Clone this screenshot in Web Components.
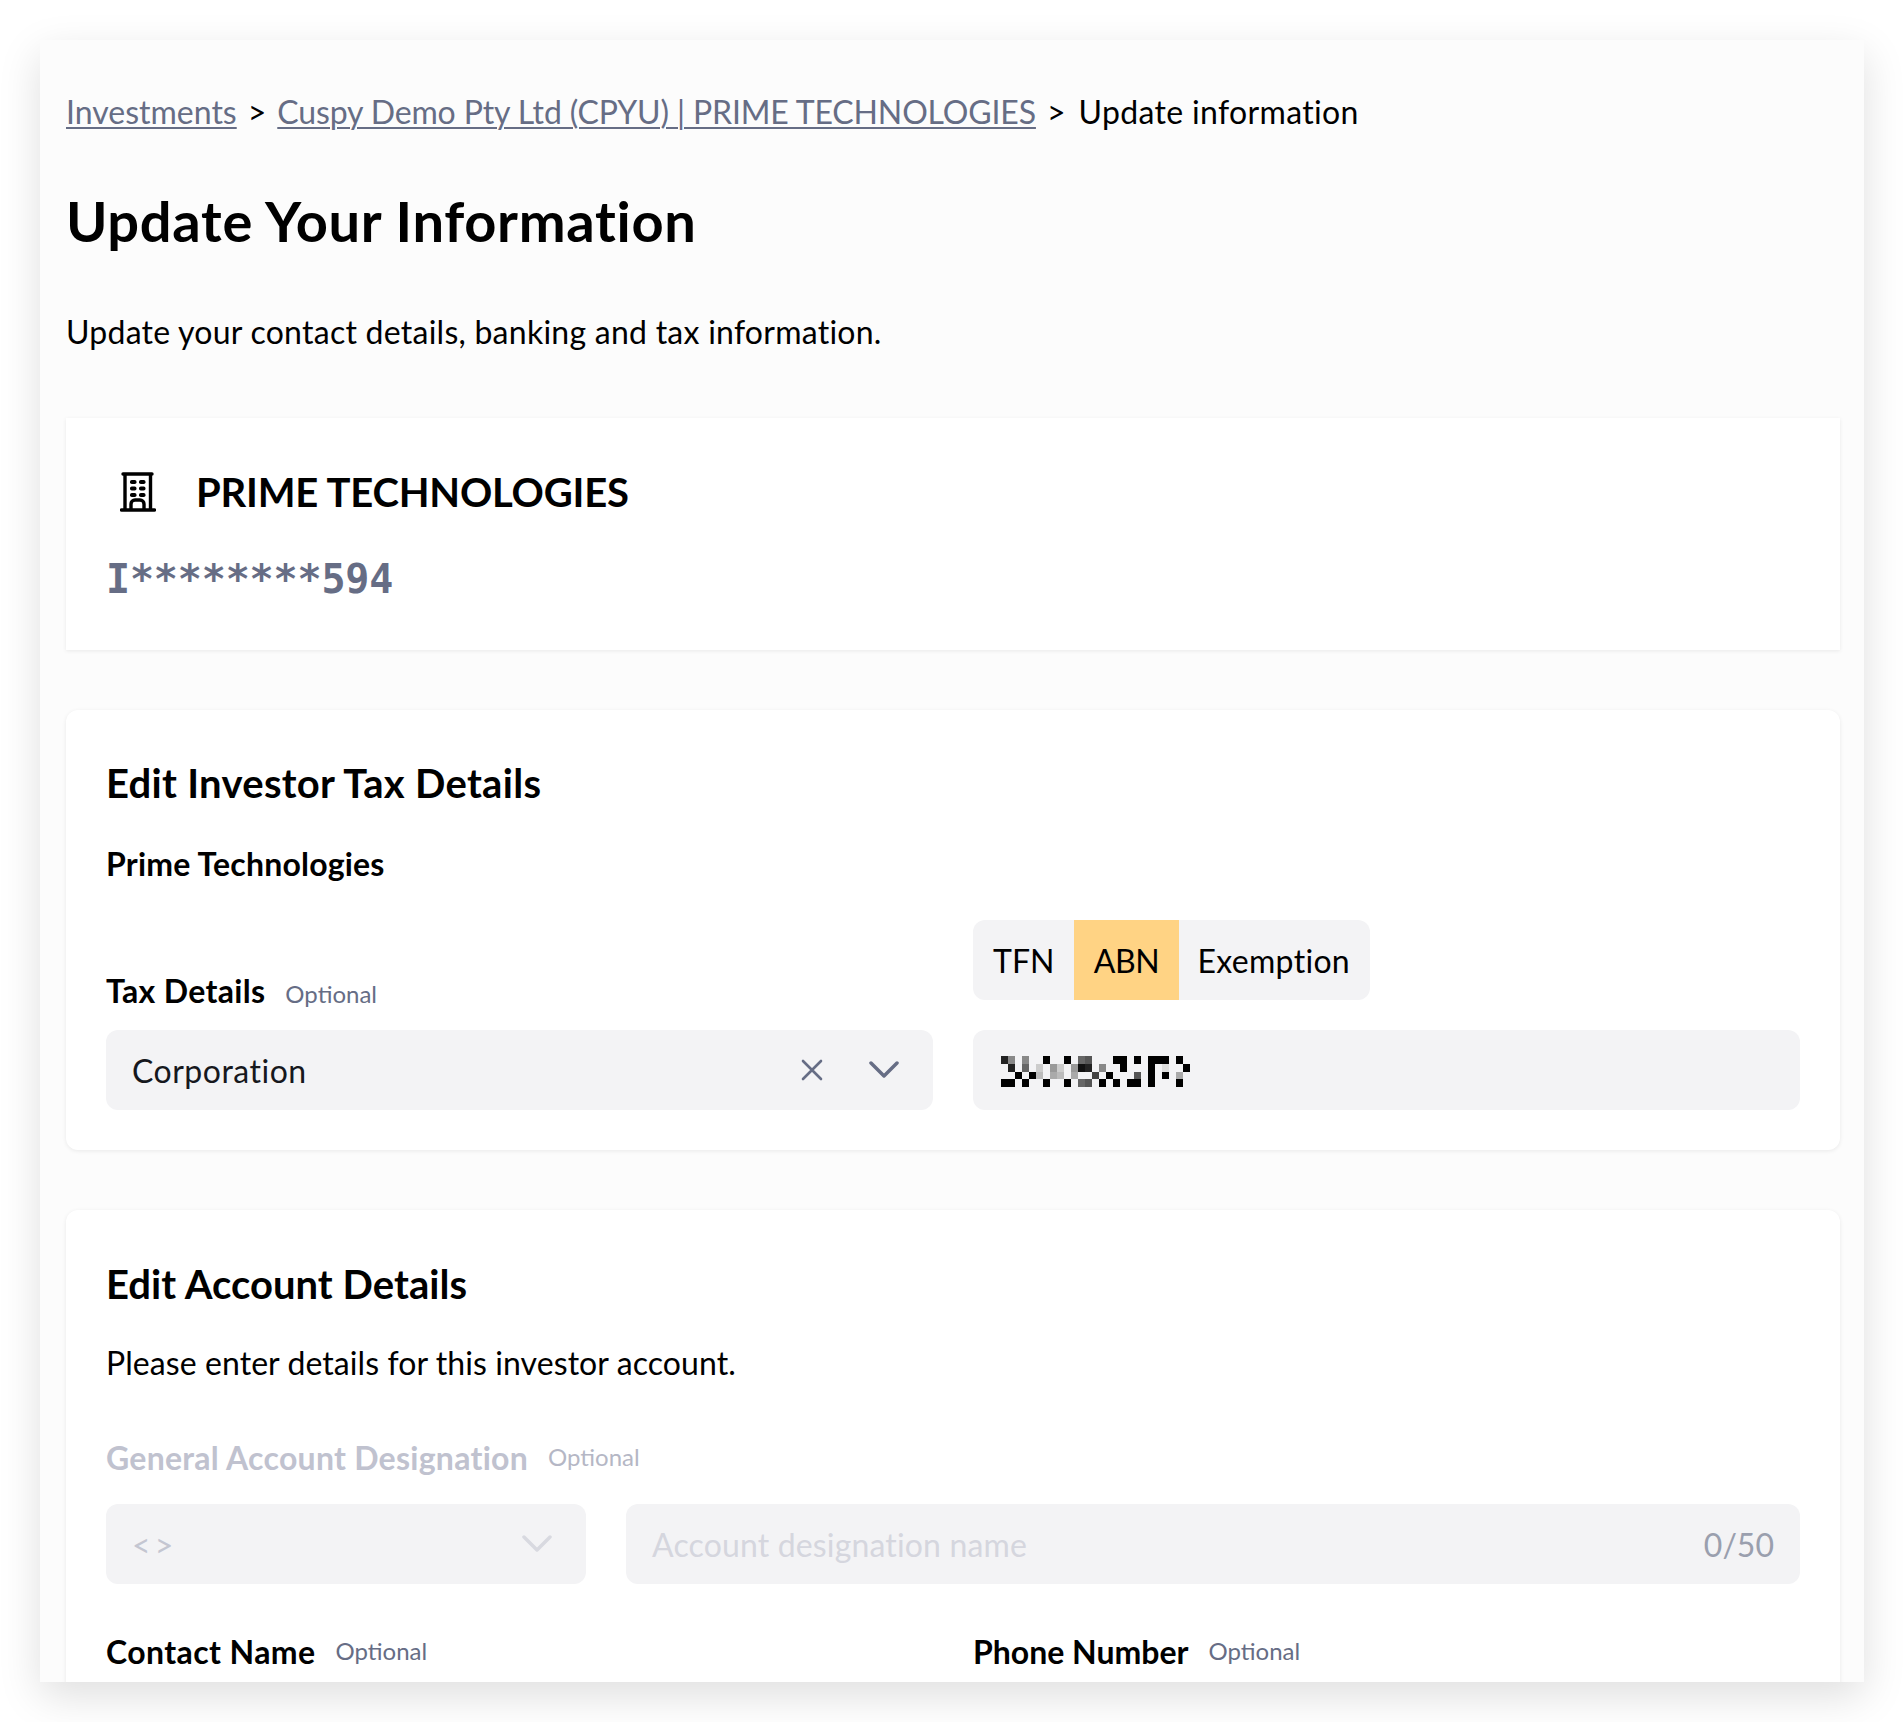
<!doctype html>
<html><head><meta charset="utf-8">
<style>
html,body{margin:0;padding:0;background:#fff}
body{height:1722px;overflow:hidden;font-family:"Lato","Liberation Sans",sans-serif;color:#000}
</style></head><body>
<app-window>
<crumb-bar></crumb-bar>
<page-head></page-head>
<entity-card></entity-card>
<tax-card></tax-card>
<account-card></account-card>
</app-window>
<script>
const sh=(el,html)=>{el.attachShadow({mode:'open'}).innerHTML=html};
class AppWindow extends HTMLElement{connectedCallback(){sh(this,`<style>
:host{display:flex;flex-direction:column;box-sizing:border-box;margin:40px;height:1642px;width:1824px;background:#fcfcfc;overflow:hidden;padding:0 24px 0 26px;box-shadow:0 14px 40px rgba(0,0,0,.13)}
</style><slot></slot>`)}}
class CrumbBar extends HTMLElement{connectedCallback(){sh(this,`<style>
:host{display:flex;flex:none;gap:11px;height:36px;margin-top:53px;align-items:center;font-size:32px;color:#000;white-space:nowrap}
a{color:#666d85;text-decoration:underline;text-decoration-thickness:2px;text-underline-offset:3px}
a.l{letter-spacing:-.14px}
.e{letter-spacing:.35px;margin-left:2px}
</style><a>Investments</a><span>&gt;</span><a class="l">Cuspy Demo Pty Ltd (CPYU) | PRIME TECHNOLOGIES</a><span>&gt;</span><span class="e">Update information</span>`)}}
class PageHead extends HTMLElement{connectedCallback(){sh(this,`<style>
:host{display:block;flex:none}
h1{font-size:56px;font-weight:700;margin:60px 0 0;line-height:64px;letter-spacing:.7px}
p{font-size:32px;margin:59px 0 0;line-height:40px;letter-spacing:.25px}
</style><h1>Update Your Information</h1><p>Update your contact details, banking and tax information.</p>`)}}
const card=`:host{display:block;flex:none;box-sizing:border-box;background:#fff;box-shadow:0 1px 4px rgba(0,0,0,.08);padding:40px}`;
class EntityCard extends HTMLElement{connectedCallback(){sh(this,`<style>${card}
:host{margin-top:66px;height:232px}
.t{display:flex;align-items:center;gap:40px;height:44px;font-size:40px;font-weight:700;margin-top:12px;letter-spacing:-.2px}
svg{display:block;margin-left:14px}
.m{font-family:"DejaVu Sans Mono","Liberation Mono",monospace;font-weight:700;font-size:40px;color:#666d85;margin-top:43px;line-height:44px;letter-spacing:-.15px}
</style><div class="t"><svg width="36" height="40" viewBox="0 0 36 40" fill="none" stroke="#000" stroke-width="3.4" stroke-linecap="round"><path d="M3 2h29M1.5 38h33M5 2v36M30.5 2v36M11 38v-6a4 4 0 0 1 4-4h5a4 4 0 0 1 4 4v6"/><g stroke="none" fill="#000"><rect x="10" y="8" width="6.5" height="4" rx="1.8"/><rect x="19" y="8" width="6.5" height="4" rx="1.8"/><rect x="10" y="14.5" width="6.5" height="4" rx="1.8"/><rect x="19" y="14.5" width="6.5" height="4" rx="1.8"/><rect x="10" y="21" width="6.5" height="4" rx="1.8"/><rect x="19" y="21" width="6.5" height="4" rx="1.8"/></g></svg><span>PRIME TECHNOLOGIES</span></div><div class="m">I********594</div>`)}}
const chev=(c)=>`<svg width="30" height="18" viewBox="0 0 30 18" fill="none" stroke="${c}" stroke-width="3.5" stroke-linecap="round" stroke-linejoin="round" style="display:block"><path d="M2 2l13 13L28 2"/></svg>`;
class FieldBox extends HTMLElement{connectedCallback(){sh(this,`<style>
:host{display:flex;align-items:center;box-sizing:border-box;height:80px;background:#f3f3f5;border-radius:12px;padding:0 26px;font-size:32px;color:#16181d;min-width:0}
</style><slot></slot>`)}}
class FieldLabel extends HTMLElement{connectedCallback(){sh(this,`<style>
:host{display:flex;align-items:baseline;gap:20px;font-size:32px;font-weight:700;color:var(--lc,#000);white-space:nowrap}
small{font-size:24px;font-weight:400;color:var(--oc,#666d85);letter-spacing:0;transform:translateY(var(--oy,0))}
</style><slot></slot><small>Optional</small>`)}}
class MaskedValue extends HTMLElement{connectedCallback(){
 const rows=[
 {0:'#222',1:'#888',3:'#888',6:'#000',9:'#000',11:'#666',12:'#555',16:'#000',17:'#000',19:'#000',21:'#000',22:'#000',23:'#000',25:'#000'},
 {1:'#222',3:'#666',5:'#ccc',7:'#999',8:'#ccc',10:'#999',11:'#111',12:'#222',14:'#888',17:'#000',21:'#000',23:'#ddd',26:'#000'},
 {2:'#000',4:'#000',5:'#bbb',7:'#aaa',8:'#bbb',10:'#aaa',13:'#444',15:'#000',19:'#555',21:'#000',23:'#000',25:'#aaa'},
 {0:'#000',1:'#000',3:'#000',6:'#000',9:'#000',11:'#666',12:'#555',14:'#000',16:'#000',18:'#000',19:'#000',21:'#000',25:'#000'}];
 let r='';
 rows.forEach((row,y)=>Object.entries(row).forEach(([x,c])=>{r+=`<rect x="${x*7}" y="${y*7.75}" width="7" height="7.75" fill="${c}"/>`}));
 sh(this,`<style>:host{display:block;margin:3px 0 0 2px}svg{display:block}</style><svg width="189" height="31" viewBox="0 0 189 31" shape-rendering="crispEdges">${r}</svg>`)}}
class TaxCard extends HTMLElement{connectedCallback(){sh(this,`<style>${card}
:host{margin-top:60px;height:440px;border-radius:12px}
h2{font-size:40px;font-weight:700;margin:8px 0 0;line-height:50px;letter-spacing:.3px}
h3{font-size:32px;font-weight:700;margin:36px 0 0;line-height:40px;letter-spacing:.2px}
.g{display:grid;grid-template-columns:1fr 1fr;column-gap:40px}
.tabs{display:flex;height:80px;width:397px;background:#f3f3f5;border-radius:12px;overflow:hidden;font-size:32px;align-items:stretch}
.tabs span{display:flex;align-items:center;padding:0 20px}
.tabs .on{background:#ffd384;letter-spacing:-.4px;width:105px;box-sizing:border-box;padding:0;justify-content:center}
.tabs .ex{letter-spacing:.3px;padding:0 20px 0 19px}
.f{margin-top:30px}
.x{margin-left:auto;margin-right:8px;display:flex;align-items:center;gap:46px}
.top{margin-top:36px}
.lab{align-self:end;margin-bottom:-10px}
.c{letter-spacing:.5px}
field-label{letter-spacing:.33px}
</style><h2>Edit Investor Tax Details</h2><h3>Prime Technologies</h3>
<div class="g top"><div class="lab"><field-label>Tax Details</field-label></div><div class="tabs"><span>TFN</span><span class="on">ABN</span><span class="ex">Exemption</span></div></div>
<div class="g f"><field-box><span class="c">Corporation</span><span class="x"><svg width="22" height="22" viewBox="0 0 22 22" fill="none" stroke="#666d85" stroke-width="2.6" stroke-linecap="round" style="display:block"><path d="M2 2l18 18M20 2L2 20"/></svg>${chev('#666d85')}</span></field-box><field-box><masked-value></masked-value></field-box></div>`)}}
class AccountCard extends HTMLElement{connectedCallback(){sh(this,`<style>${card}
:host{margin-top:60px;height:700px;border-radius:12px;--oy:-4px}
h2{font-size:40px;font-weight:700;margin:9px 0 0;line-height:50px;letter-spacing:.05px}
p{font-size:32px;margin:34px 0 0;line-height:40px;letter-spacing:.08px}
.des{--lc:#c0c2cf;--oc:#b5b7c5;margin-top:55px;letter-spacing:.27px}
.r1{display:grid;grid-template-columns:480px 1fr;column-gap:40px;margin-top:27px}
.ph{color:#d5d6de;letter-spacing:.15px}
.cnt{margin-left:auto;color:#9a9fae}
.arrows{color:#c4c6d1;word-spacing:-4px}
.e{margin-left:auto;margin-right:8px;display:flex}
.r2{display:grid;grid-template-columns:1fr 1fr;column-gap:40px;margin-top:48px}
.n{letter-spacing:.4px}
</style><h2>Edit Account Details</h2><p>Please enter details for this investor account.</p>
<div class="des"><field-label>General Account Designation</field-label></div>
<div class="r1"><field-box><span class="arrows">&lt; &gt;</span><span class="e">${chev('#d8d9e0')}</span></field-box><field-box><span class="ph">Account designation name</span><span class="cnt">0/50</span></field-box></div>
<div class="r2"><field-label class="n">Contact Name</field-label><field-label>Phone Number</field-label></div>`)}}
customElements.define('app-window',AppWindow);
customElements.define('crumb-bar',CrumbBar);
customElements.define('page-head',PageHead);
customElements.define('entity-card',EntityCard);
customElements.define('field-box',FieldBox);
customElements.define('field-label',FieldLabel);
customElements.define('masked-value',MaskedValue);
customElements.define('tax-card',TaxCard);
customElements.define('account-card',AccountCard);
</script></body></html>
